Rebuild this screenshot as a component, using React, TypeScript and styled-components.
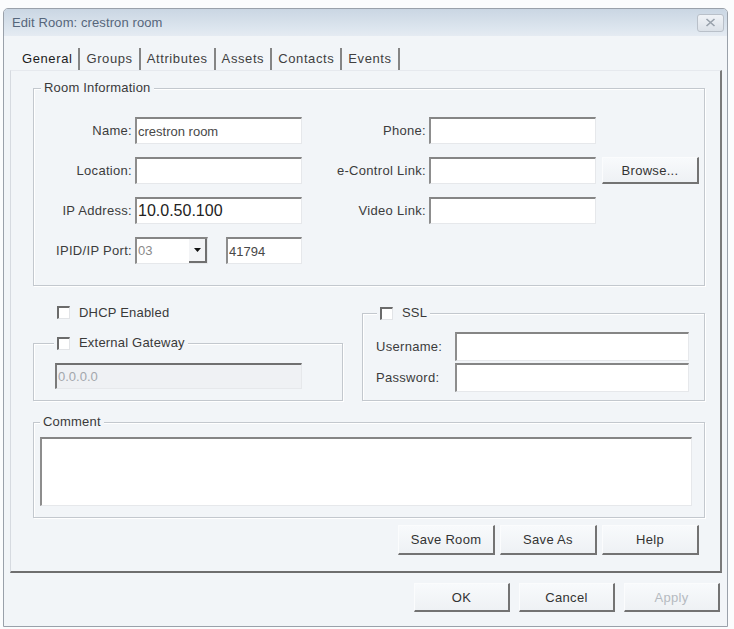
import * as React from "react";
import styled, { createGlobalStyle } from "styled-components";

const GlobalStyle = createGlobalStyle`
    body {
        margin: 0;
        background: #fbfcfd;
        font-family: "Liberation Sans", Arial, sans-serif;
        font-size: 13px;
        color: #3a3a3a;
    }
`

const Page = styled.div`
    padding: 8px 0 0 3px;
`

const Window = styled.div`
    width: 725px;
    height: 619px;
    box-sizing: border-box;
    border: 1px solid #9aa1aa;
    border-radius: 5px 5px 0 0;
    background: #f2f5f8;
    display: flex;
    flex-direction: column;
    overflow: hidden;
`

const TitleBar = styled.div`
    flex: none;
    height: 27px;
    display: flex;
    align-items: center;
    justify-content: space-between;
    padding: 0 3px 0 8px;
    background: linear-gradient(#cad6e3, #dce5ee 70%, #e5ebf2);
    color: #56667b;
    letter-spacing: 0.1px;
`

const CloseButton = styled.div`
    width: 27px;
    height: 18px;
    box-sizing: border-box;
    border: 1px solid #b9c0c9;
    border-radius: 3px;
    background: linear-gradient(#f0f3f7, #dbe1e8);
    display: flex;
    align-items: center;
    justify-content: center;
`

const TabStrip = styled.div`
    flex: none;
    height: 34px;
    display: flex;
    align-items: flex-end;
    padding-left: 12px;
`

const Tab = styled.div<{ $active?: boolean }>`
    height: 23px;
    line-height: 22px;
    padding: 0 6px;
    margin-bottom: -1px;
    border-right: 2px solid #858585;
    color: ${p => p.$active ? "#1c1c1c" : "#404040"};
    letter-spacing: 0.6px;
`

const TabPanel = styled.div`
    flex: none;
    height: 503px;
    margin: 0 5px 0 6px;
    box-sizing: border-box;
    border-top: 1px solid #e6e9ee;
    border-left: 1px solid #d6dae0;
    border-right: 2px solid #7a7a7a;
    border-bottom: 2px solid #6f6f6f;
    padding: 17px 15px 0 22px;
    display: flex;
    flex-direction: column;
`

const Group = styled.div<{ $height: number; $width?: number; $top?: number }>`
    flex: none;
    box-sizing: border-box;
    height: ${p => p.$height}px;
    width: ${p => p.$width ? `${p.$width}px` : "auto"};
    margin-top: ${p => p.$top || 0}px;
    border: 1px solid #c3c8ce;
    box-shadow: inset 1px 1px 0 #fff, 1px 1px 0 #fff;
    display: flex;
    flex-direction: column;
`

const GroupTitle = styled.div<{ $indent: number }>`
    align-self: flex-start;
    height: 16px;
    line-height: 16px;
    margin: -9px 0 0 ${p => p.$indent}px;
    padding: 0 3px;
    background: #f2f5f8;
    display: flex;
    align-items: center;
    gap: 9px;
    letter-spacing: 0.2px;
`

const FieldGrid = styled.div`
    display: grid;
    grid-template-columns: 98px 167px 121px 167px 100px;
    grid-auto-rows: 27px;
    column-gap: 3px;
    row-gap: 13px;
    margin-top: 21px;
    align-items: center;
`

const Label = styled.label<{ $left?: boolean }>`
    text-align: ${p => p.$left ? "left" : "right"};
    letter-spacing: 0.3px;
    color: #3c3c3c;
`

const TextBox = styled.input<{ $big?: boolean; $width?: number; $height?: number }>`
    box-sizing: border-box;
    width: ${p => p.$width ? `${p.$width}px` : "100%"};
    height: ${p => p.$height || 27}px;
    margin: 0;
    padding: 0 0 0 1px;
    background: #fff;
    border: none;
    border-top: 2px solid #858585;
    border-left: 2px solid #8d8d8d;
    border-right: 1px solid #e6e8eb;
    border-bottom: 1px solid #e6e8eb;
    font-family: inherit;
    font-size: ${p => p.$big ? 16 : 13}px;
    color: ${p => p.$big ? "#222" : "#484848"};
    outline: none;

    &:disabled {
        background: #eff1f4;
        color: #a3a7ac;
        border-top-color: #707070;
        border-left-color: #7a7a7a;
    }
`

const PortRow = styled.div`
    display: flex;
    justify-content: space-between;
    align-items: center;
`

const Combo = styled.div`
    width: 73px;
    height: 27px;
    box-sizing: border-box;
    display: flex;
    background: #fff;
    border-top: 2px solid #858585;
    border-left: 2px solid #8d8d8d;
    border-right: 1px solid #e6e8eb;
    border-bottom: 1px solid #e6e8eb;
`

const ComboValue = styled.span`
    flex: 1;
    padding-left: 1px;
    line-height: 24px;
    color: #8a8a8a;
`

const ComboButton = styled.div`
    width: 18px;
    box-sizing: border-box;
    background: #f3f4f6;
    border-right: 2px solid #707070;
    border-bottom: 2px solid #707070;
    display: flex;
    align-items: center;
    justify-content: center;
`

const Button = styled.button<{ $width: number; $height: number }>`
    box-sizing: border-box;
    width: ${p => p.$width}px;
    height: ${p => p.$height}px;
    margin: 0;
    padding: 0;
    background: linear-gradient(#f8fafc, #eef1f4);
    border: none;
    border-top: 1px solid #fbfcfd;
    border-left: 1px solid #fbfcfd;
    border-right: 2px solid #737373;
    border-bottom: 2px solid #737373;
    font-family: inherit;
    font-size: 13px;
    letter-spacing: 0.3px;
    color: #333;

    &:disabled {
        color: #b5bac0;
    }
`

const BrowseButton = styled(Button)`
    margin-left: 3px;
`

const MiddleRow = styled.div`
    flex: none;
    display: flex;
    gap: 19px;
    height: 115px;
`

const LeftColumn = styled.div`
    width: 310px;
    display: flex;
    flex-direction: column;
`

const CheckRow = styled.div`
    display: flex;
    align-items: center;
    gap: 9px;
    height: 13px;
    margin-top: 20px;
    padding-left: 24px;
    letter-spacing: 0.2px;
`

const CheckBox = styled.span`
    flex: none;
    width: 13px;
    height: 13px;
    box-sizing: border-box;
    background: #fff;
    border-top: 2px solid #6b6b6b;
    border-left: 2px solid #6b6b6b;
    border-right: 1px solid #e2e4e7;
    border-bottom: 1px solid #e2e4e7;
`

const GatewayBox = styled.div`
    margin: 12px 0 0 21px;
`

const LoginGrid = styled.div`
    display: grid;
    grid-template-columns: 79px 234px;
    grid-auto-rows: 29px;
    row-gap: 2px;
    align-items: center;
    margin-top: 11px;
    padding-left: 13px;
`

const CommentArea = styled.textarea`
    box-sizing: border-box;
    width: 652px;
    height: 69px;
    margin: 7px 0 0 6px;
    padding: 2px;
    resize: none;
    background: #fff;
    border: none;
    border-top: 2px solid #858585;
    border-left: 2px solid #8d8d8d;
    border-right: 1px solid #e6e8eb;
    border-bottom: 1px solid #e6e8eb;
    font-family: inherit;
    font-size: 13px;
    outline: none;
`

const ButtonRow = styled.div<{ $gap: number; $top: number; $right: number }>`
    flex: none;
    display: flex;
    justify-content: flex-end;
    gap: ${p => p.$gap}px;
    margin-top: ${p => p.$top}px;
    padding-right: ${p => p.$right}px;
`

const tabs = ["General", "Groups", "Attributes", "Assets", "Contacts", "Events"]

export default function App() {
    return (
        <Page>
            <GlobalStyle />
            <Window>
                <TitleBar>
                    <span>Edit Room: crestron room</span>
                    <CloseButton>
                        <svg width="11" height="9" viewBox="0 0 11 9">
                            <path d="M1.5 1 L9.5 8 M9.5 1 L1.5 8" stroke="#98a1ab" strokeWidth="1.6" />
                        </svg>
                    </CloseButton>
                </TitleBar>

                <TabStrip>
                    {tabs.map((t, i) => <Tab key={t} $active={i === 0}>{t}</Tab>)}
                </TabStrip>

                <TabPanel>
                    <Group $height={198}>
                        <GroupTitle $indent={7}>Room Information</GroupTitle>
                        <FieldGrid>
                            <Label>Name:</Label>
                            <TextBox readOnly defaultValue="crestron room" />
                            <Label>Phone:</Label>
                            <TextBox readOnly />
                            <span />

                            <Label>Location:</Label>
                            <TextBox readOnly />
                            <Label>e-Control Link:</Label>
                            <TextBox readOnly />
                            <BrowseButton $width={97} $height={27}>Browse...</BrowseButton>

                            <Label>IP Address:</Label>
                            <TextBox readOnly $big defaultValue="10.0.50.100" />
                            <Label>Video Link:</Label>
                            <TextBox readOnly />
                            <span />

                            <Label>IPID/IP Port:</Label>
                            <PortRow>
                                <Combo>
                                    <ComboValue>03</ComboValue>
                                    <ComboButton>
                                        <svg width="7" height="4" viewBox="0 0 7 4">
                                            <path d="M0 0 H7 L3.5 4 Z" fill="#111" />
                                        </svg>
                                    </ComboButton>
                                </Combo>
                                <TextBox readOnly $width={76} defaultValue="41794" />
                            </PortRow>
                        </FieldGrid>
                    </Group>

                    <MiddleRow>
                        <LeftColumn>
                            <CheckRow>
                                <CheckBox />
                                DHCP Enabled
                            </CheckRow>
                            <Group $height={58} $top={24}>
                                <GroupTitle $indent={20}>
                                    <CheckBox />
                                    External Gateway
                                </GroupTitle>
                                <GatewayBox>
                                    <TextBox disabled $width={247} $height={26} defaultValue="0.0.0.0" />
                                </GatewayBox>
                            </Group>
                        </LeftColumn>

                        <Group $height={88} $width={343} $top={27}>
                            <GroupTitle $indent={14}>
                                <CheckBox />
                                SSL
                            </GroupTitle>
                            <LoginGrid>
                                <Label $left>Username:</Label>
                                <TextBox readOnly $height={29} />
                                <Label $left>Password:</Label>
                                <TextBox readOnly $height={29} />
                            </LoginGrid>
                        </Group>
                    </MiddleRow>

                    <Group $height={96} $top={21}>
                        <GroupTitle $indent={6}>Comment</GroupTitle>
                        <CommentArea readOnly />
                    </Group>

                    <ButtonRow $gap={5} $top={7} $right={6}>
                        <Button $width={97} $height={30}>Save Room</Button>
                        <Button $width={97} $height={30}>Save As</Button>
                        <Button $width={97} $height={30}>Help</Button>
                    </ButtonRow>
                </TabPanel>

                <ButtonRow $gap={9} $top={10} $right={7}>
                    <Button $width={96} $height={29}>OK</Button>
                    <Button $width={96} $height={29}>Cancel</Button>
                    <Button $width={96} $height={29} disabled>Apply</Button>
                </ButtonRow>
            </Window>
        </Page>
    )
}
